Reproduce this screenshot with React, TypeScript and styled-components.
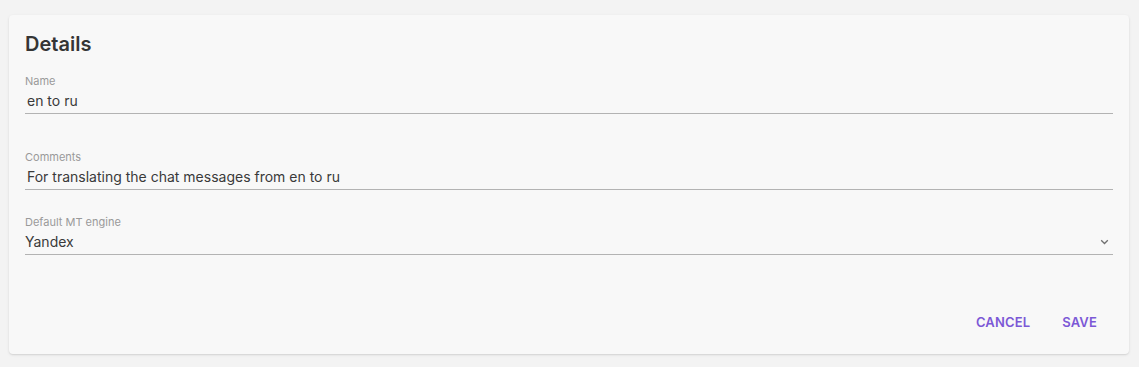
import React from "react";
import styled, { createGlobalStyle } from "styled-components";

const Global = createGlobalStyle`
  html, body { margin: 0; padding: 0; background: #f3f3f3; }
  body { font-family: Inter, "Noto Sans", sans-serif; -webkit-font-smoothing: antialiased; }
  * { box-sizing: border-box; }
`;

const Page = styled.div`
  padding: 15px 10px 13px 9px;
`;

const Card = styled.section`
  background: #f8f8f8;
  border-radius: 4px;
  box-shadow: 0 1px 3px rgba(0, 0, 0, 0.1), 0 1px 1px rgba(0, 0, 0, 0.05);
  padding: 17px 16px 14px;
  display: flex;
  flex-direction: column;
`;

const Title = styled.h2`
  margin: 0;
  font-size: 20px;
  line-height: 24px;
  font-weight: 600;
  color: #353535;
`;

const Field = styled.div<{ $top: number }>`
  margin-top: ${(p) => p.$top}px;
  display: flex;
  flex-direction: column;
`;

const Label = styled.label`
  font-size: 11px;
  line-height: 16px;
  color: #9a9a9a;
  margin-bottom: 2px;
`;

const Control = styled.div<{ $indent: number }>`
  display: flex;
  align-items: center;
  height: 23px;
  padding: 0 4px 2px ${(p) => p.$indent}px;
  border-bottom: 1px solid #b3b3b3;
  font-size: 14px;
  line-height: 20px;
  color: #3a3a3a;
`;

const Value = styled.span`
  flex: 1;
  white-space: nowrap;
`;

const Actions = styled.div`
  margin-top: 49px;
  display: flex;
  justify-content: flex-end;
`;

const TextButton = styled.button`
  border: 0;
  background: transparent;
  padding: 8px 16px;
  font-family: Inter, "Noto Sans", sans-serif;
  font-size: 13px;
  line-height: 20px;
  font-weight: 600;
  letter-spacing: 0.15px;
  text-transform: uppercase;
  color: #7c58d6;
  cursor: pointer;
  border-radius: 4px;
`;

const Chevron = () => (
  <svg width="9" height="6" viewBox="0 0 9 6" fill="none">
    <path d="M1.2 1.3 L4.5 4.5 L7.8 1.3" stroke="#707070" strokeWidth="1.3" />
  </svg>
);

export default function App() {
  return (
    <Page>
      <Global />
      <Card>
        <Title>Details</Title>
        <Field $top={17}>
          <Label>Name</Label>
          <Control $indent={2}>
            <Value>en to ru</Value>
          </Control>
        </Field>
        <Field $top={35}>
          <Label>Comments</Label>
          <Control $indent={2}>
            <Value>For translating the chat messages from en to ru</Value>
          </Control>
        </Field>
        <Field $top={24}>
          <Label>Default MT engine</Label>
          <Control $indent={0}>
            <Value>Yandex</Value>
            <Chevron />
          </Control>
        </Field>
        <Actions>
          <TextButton>Cancel</TextButton>
          <TextButton>Save</TextButton>
        </Actions>
      </Card>
    </Page>
  );
}
